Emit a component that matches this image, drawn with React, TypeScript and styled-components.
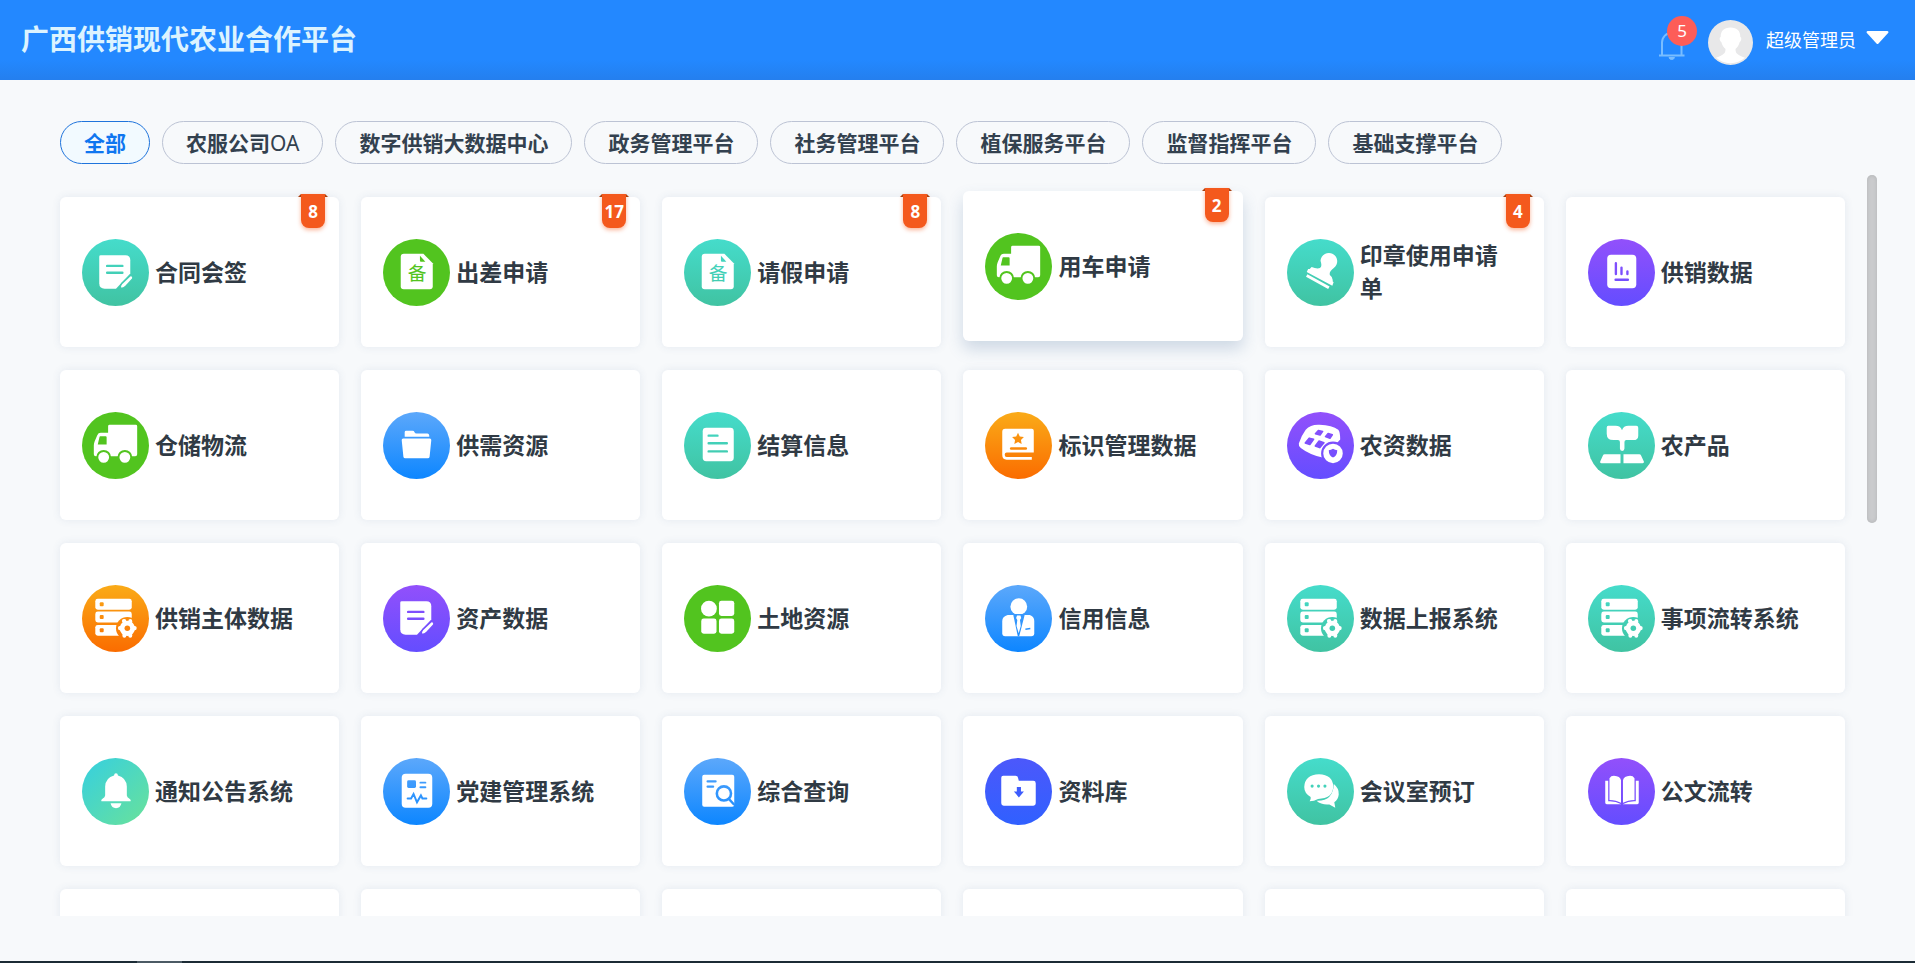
import React from "react";
import styled, { createGlobalStyle } from "styled-components";

const GlobalStyle = createGlobalStyle`
  *, *::before, *::after { box-sizing: border-box; }
  body {
    margin: 0;
    background: #f7f9fb;
    font-family: "Noto Sans", "Noto Sans CJK SC", sans-serif;
    color: #303a46;
  }
  button { font: inherit; color: inherit; cursor: pointer; }
`;

const Page = styled.div`
  display: flex;
  flex-direction: column;
  height: 100vh;
`;

const Header = styled.header`
  flex: none;
  display: flex;
  align-items: center;
  justify-content: space-between;
  height: 80px;
  padding: 0 26px 4px 21px;
  background: linear-gradient(#2388ff 75%, #247fee);
`;

const Title = styled.h1`
  margin: 0;
  font-size: 28px;
  line-height: 40px;
  font-weight: 700;
  font-family: "Noto Sans CJK SC", sans-serif;
  color: #dcf3ff;
`;

const UserArea = styled.div`
  display: flex;
  align-items: center;
  gap: 13px;
  padding-top: 8px;
`;

const BellButton = styled.button`
  position: relative;
  width: 36px;
  height: 46px;
  padding: 10px 0 0;
  border: 0;
  background: none;
  text-align: left;
`;

const BellCount = styled.span`
  position: absolute;
  top: -3px;
  right: -2px;
  width: 30px;
  height: 30px;
  border-radius: 50%;
  background: #fd5d58;
  color: #fff;
  font-size: 17px;
  line-height: 30px;
  text-align: center;
`;

const UserButton = styled.button`
  display: flex;
  align-items: center;
  gap: 13px;
  padding: 0;
  border: 0;
  background: none;
`;

const UserName = styled.span`
  font-size: 18px;
  line-height: 28px;
  color: #fff;
  padding-bottom: 4px;
`;

const Caret = styled.svg`
  margin: 0 0 8px -3px;
`;

const Main = styled.main`
  flex: 1;
  min-height: 0;
  display: flex;
  flex-direction: column;
  gap: 11px;
  padding: 41px 38px 45px 50px;
`;

const Tabs = styled.nav`
  display: flex;
  gap: 12px;
  padding-left: 10px;
`;

const Tab = styled.button<{ $active?: boolean }>`
  height: 43px;
  padding: 0 23px;
  border: 1px solid ${(p) => (p.$active ? "#1f74dc" : "#bcc3d4")};
  border-radius: 22px;
  background: ${(p) => (p.$active ? "#f2faff" : "#f7f9fb")};
  color: ${(p) => (p.$active ? "#0f76f0" : "#33414f")};
  font-size: 21px;
  line-height: 40px;
  font-weight: 700;
  white-space: nowrap;
`;

const Latin = styled.span`
  font-weight: 400;
`;

const Panel = styled.div`
  flex: 1;
  min-height: 0;
  display: flex;
  gap: 10px;
`;

const Scroller = styled.div`
  flex: 1;
  min-width: 0;
  overflow-y: auto;
  scrollbar-width: none;
  padding: 22px 12px 22px 10px;
`;

const Rail = styled.div`
  width: 10px;
`;

const Thumb = styled.div`
  height: 47%;
  border-radius: 5px;
  background: #cbccce;
  box-shadow: inset 0 0 4px #b2b4b6;
`;

const Grid = styled.div`
  display: grid;
  grid-template-columns: repeat(6, minmax(0, 1fr));
  gap: 23px 22px;
`;

const Card = styled.a<{ $raised?: boolean }>`
  position: relative;
  display: flex;
  align-items: center;
  gap: 6px;
  height: 150px;
  padding: 0 28px 0 22px;
  border-radius: 6px;
  background: #fff;
  color: #303a44;
  text-decoration: none;
  box-shadow: ${(p) =>
    p.$raised ? "0 8px 16px rgba(60, 100, 150, 0.22)" : "0 0 8px rgba(60, 90, 140, 0.1)"};
  transform: ${(p) => (p.$raised ? "translateY(-6px)" : "none")};
`;

const CardName = styled.span`
  font-size: 23px;
  line-height: 33px;
  font-weight: 700;
`;

const Ribbon = styled.span`
  position: absolute;
  top: -3px;
  right: 14px;
  width: 24px;
  height: 34px;
  border-radius: 0 0 8px 8px;
  background: #f4591d;
  color: #fff;
  font-size: 17px;
  line-height: 36px;
  font-weight: 700;
  text-align: center;
  box-shadow: 0 2px 4px rgba(244, 89, 29, 0.45);

  &::before,
  &::after {
    content: "";
    position: absolute;
    top: 0;
    border-bottom: 3px solid #a8410f;
  }
  &::before {
    left: -3px;
    border-left: 3px solid transparent;
  }
  &::after {
    right: -3px;
    border-right: 3px solid transparent;
  }
`;

const IconSvg = styled.svg`
  flex: none;
  display: block;
`;

const Taskbar = styled.footer`
  flex: none;
  height: 2px;
  background: linear-gradient(90deg, #1b2b35 137px, #4b5a64 137px, #4b5a64 182px, #1b2b35 182px);
`;

type Tone = "teal" | "green" | "violet" | "blue" | "orange" | "mint" | "indigo";

const tones: Record<Tone, [string, string]> = {
  teal: ["#45dccb", "#40c3a2"],
  green: ["#52c41f", "#52c41f"],
  violet: ["#9250fb", "#644dff"],
  blue: ["#5ca8fb", "#0d86ff"],
  orange: ["#faab18", "#fa6c00"],
  mint: ["#3dd2d6", "#62dfa4"],
  indigo: ["#4c58fb", "#3060ff"],
};

type Glyph =
  | "sign" | "form" | "truck" | "stamp" | "chart" | "folder" | "list" | "book"
  | "solar" | "sprout" | "server" | "blocks" | "person" | "bell" | "party"
  | "search" | "library" | "chat" | "reader";

function drawGlyph(kind: Glyph, c: string): React.ReactNode {
  const line = { fill: "none", stroke: c, strokeWidth: 2.4, strokeLinecap: "round" as const };
  switch (kind) {
    case "sign":
      return (
        <>
          <path d="M19 16.500H44q5 0 5 5V35L34.500 50.500H23q-5.500 0-5.500-5.500V18q0-1.500 1.500-1.500z" />
          <path d="M25.500 27.300H41M25.500 34.300H41" {...line} />
          <path
            d="M48.500 37.500q1-1 2.300 0t.7 2.800L44.500 48q-1.800 2-5.500 2.300-.5-3.300 1.500-5.300z"
            stroke={c}
            strokeWidth="1.500"
          />
        </>
      );
    case "form":
      return (
        <>
          <path d="M21 15h20l9.500 9.500V48q0 3-3 3H21q-3 0-3-3V18q0-3 3-3z" />
          <path d="M37.500 17l5.500 6h-4.500q-1 0-1-1z" fill={c} />
          <text x="34.500" y="42" fontSize="19" textAnchor="middle" fill={c}>备</text>
        </>
      );
    case "truck":
      return (
        <>
          <path d="M28 13h26.500q1.500 0 1.500 1.500V43q0 2-2 2H14q-2 0-2-2V34q0-2 .8-4l2.700-6.500q1-2.500 3.500-2.500H26.500V14.500q0-1.500 1.500-1.500z" />
          <path d="M18.500 24.500H24q1 0 1 1V33h-9l1.700-7.500q.2-1 .8-1z" fill={c} />
          <circle cx="22" cy="46" r="6.500" stroke={c} strokeWidth="2" />
          <circle cx="43.500" cy="46" r="6.500" stroke={c} strokeWidth="2" />
        </>
      );
    case "stamp":
      return (
        <>
          <path d="M34 22a8.500 8.500 0 1 1 13.500 7.500Q42.500 33 43.500 36.500q3.500 2.500 2.800 6.500l1 1-1.300 3.500L20 33.500l1.500-3h1.500l2-2q5 2 8.500 1Q36 28 34 22z" />
          <path d="M20 37l22.500 12.500" stroke="#fff" strokeWidth="3" />
        </>
      );
    case "chart":
      return (
        <>
          <rect x="19.500" y="16" width="29.500" height="34" rx="4" />
          <path d="M28.300 24.500V35.500M34 29v6.500M40 33v2.500M28 41.300H40.500" {...line} />
        </>
      );
    case "folder":
      return (
        <>
          <path d="M23.500 19h6.500q1.500 0 2 1.500.5 1.300 2 1.300h11q2 0 2 3.200H22V20.500q0-1.500 1.500-1.500z" />
          <path d="M20.500 27h27q1.700 0 1.500 1.700l-1.700 16.600q-.2 1.700-1.900 1.700H22.600q-1.700 0-1.900-1.700L19 28.700Q18.800 27 20.500 27z" />
        </>
      );
    case "list":
      return (
        <>
          <rect x="19" y="16" width="31.500" height="34" rx="3.500" />
          <path d="M25 24H34M25 31.700H43.500M25 40H43.500" {...line} />
        </>
      );
    case "book":
      return (
        <>
          <path d="M20.500 17H47.500q2 0 2 2V41H22q-2 0-2 2.300t2 2.300H47.500V48.500H22q-4.500 0-4.500-5V20q0-3 3-3z" />
          <path d="M33.500 21l1.800 3.800 4.200.5-3 3 .7 4.200-3.700-2-3.700 2 .7-4.200-3-3 4.200-.5z" fill={c} />
          <path d="M26.500 37H41.500" {...line} />
        </>
      );
    case "solar":
      return (
        <>
          <path d="M12 32Q14.500 24 19 18q5-5.500 14-5 13 .5 19 5 2 2 2 10L37 46.500q-14-3-23-10-2.500-2-2-4.500z" />
          <g fill={c} strokeLinejoin="round" stroke={c} strokeWidth="1.500">
            <path d="M28.800 22l3-3.300 4.400 1-2.600 3.700z" />
            <path d="M39 25l2.700-3.300 4.300 1.400-2.400 3.600z" />
            <path d="M18.500 31.500l4-5 4.500 1.200-3.800 5.300z" />
            <path d="M28.700 34.500l3.800-5 5 1.700-4.300 5z" />
          </g>
          <circle cx="46.700" cy="42" r="11" stroke={c} strokeWidth="2.200" />
          <path d="M46.700 37.300q2 1.400 4.300 1.500 0 5.500-4.300 7.500-4.300-2-4.300-7.500 2.300-.1 4.300-1.500z" fill={c} />
        </>
      );
    case "sprout":
      return (
        <>
          <path d="M20.500 14H28q5 0 6.500 4.500Q36 14 41 14h8q2 0 2 2v8q0 4.500-5 4.500h-7q-2 0-2 2V37q0 2.500-2.300 2.500T32.400 37V30.500q0-2-2-2H26q-7 0-7-6.500V16q0-2 1.500-2z" />
          <path d="M17 43H33v9H13.500q-1.500 0-1.200-1.500L15 44.500q.6-1.500 2-1.500zM36 43H52q1.400 0 2 1.500l2.800 6Q57 52 55.500 52H36z" />
        </>
      );
    case "server":
      return (
        <>
          <rect x="13.500" y="14" width="37" height="11" rx="2.500" />
          <rect x="13.500" y="27" width="37" height="11" rx="2.500" />
          <rect x="13.500" y="40.500" width="26" height="11" rx="2.500" />
          <rect x="18" y="17.500" width="4" height="4" rx="1" fill={c} />
          <rect x="18" y="30.500" width="4" height="4" rx="1" fill={c} />
          <rect x="18" y="44" width="4" height="4" rx="1" fill={c} />
          <circle cx="46" cy="44" r="11.500" fill={c} />
          <circle cx="46" cy="44" r="7.800" />
          <path
            d="M43 37.500v-1M49 37.500v-1M43 50.500v1M49 50.500v1M39 43.500h-.5M53 43.500h.5M40 40.500M43 36.500h-.5M49.500 36.500M38.500 44h1M52.500 44h1"
            stroke="#fff"
            strokeWidth="4"
            strokeLinecap="round"
          />
          <circle cx="46" cy="44" r="2.800" fill={c} />
        </>
      );
    case "blocks":
      return (
        <>
          <circle cx="25.300" cy="24" r="8" />
          <rect x="35.500" y="16" width="15.500" height="15.500" rx="2.500" />
          <rect x="17.500" y="34" width="15.500" height="15.500" rx="2.500" />
          <rect x="35.500" y="34" width="15.500" height="15.500" rx="2.500" />
        </>
      );
    case "person":
      return (
        <>
          <circle cx="34.300" cy="22" r="8.500" />
          <path d="M23 30.500h22.500q4.500 1.500 4.500 6V49q0 3-3 3H20.500q-3 0-3-3V36.500q0-4.500 5.500-6z" />
          <path d="M28.500 29.500l4.800 22.500h1.400L40.500 29.500z" fill={c} />
          <path d="M32.500 31h3.500l.8 2.500-1.300 2 .8 6L34.200 49l-2.200-7.500.8-6-1.200-2z" />
          <path d="M41 45l5-.8" stroke={c} strokeWidth="1.600" />
        </>
      );
    case "bell":
      return (
        <>
          <path d="M34.500 15.500q1.800 0 2 2.300Q45 20 45.500 29V38q0 2 3 3.500 1.500 1 .8 2.500H19.700q-.7-1.500.8-2.500 3-1.500 3-3.500V29Q24 20 32.500 17.800q.2-2.300 2-2.300z" />
          <path d="M29 46H40q-1 5-5.500 5T29 46z" />
        </>
      );
    case "party":
      return (
        <>
          <rect x="19" y="16" width="31" height="34.500" rx="4" />
          <rect x="24.500" y="22.500" width="9" height="8" rx="1.500" fill={c} />
          <path d="M38 25h5M38 29.700h5M25 41h3.500l2.500-4.500 3.500 8.500 4-7 1.500 3H44" {...line} strokeWidth="2" />
        </>
      );
    case "search":
      return (
        <>
          <rect x="18.500" y="17" width="32.500" height="32.500" rx="2" />
          <path d="M24 23.700H32M24 29H29.500" {...line} />
          <circle cx="40.500" cy="36" r="7.200" fill="none" stroke={c} strokeWidth="2.600" />
          <path d="M45.500 41.500L50.500 47" {...line} />
        </>
      );
    case "library":
      return (
        <>
          <path d="M18.500 18H31q2 0 2.500 2l.8 3.200H49q2.500 0 2.500 2.500V46q0 2.500-2.500 2.500H19q-2.500 0-2.500-2.500V20q0-2 2-2z" />
          <path d="M32.300 29.500h4.200V34H39.500L34.400 40 29.300 34h3z" fill={c} />
        </>
      );
    case "chat":
      return (
        <>
          <path d="M47.500 26.500Q53 31 52.500 37q-.5 5-4.500 8l1 5.500-6-3.300Q35 48 30 43.500 47 44 47.500 26.500z" />
          <path d="M32.500 16.500q14 .5 14.500 12.500-.5 12.500-15.500 12.500-4 2.500-8.500 2.500 1.500-2 1-4.500Q17.500 36 17.500 29.500q.5-12.500 15-13z" />
          <g fill={c}>
            <circle cx="25.500" cy="28.500" r="1.600" />
            <circle cx="32" cy="28.500" r="1.600" />
            <circle cx="38.500" cy="28.500" r="1.600" />
          </g>
        </>
      );
    case "reader":
      return (
        <>
          <path d="M17.500 23h3V44q7-.5 13.300 3H19q-1.500 0-1.500-1.500zM51.500 23h-3V44q-7-.5-13.300 3H50q1.500 0 1.500-1.500z" />
          <path d="M21.800 20.500q1.500-2.500 4.500-2.500 6.500.5 7.200 4.500V45.500q-5-3-11.700-3zM47.200 20.500q-1.500-2.500-4.500-2.500-6.500.5-7.200 4.500V45.500q5-3 11.700-3z" />
        </>
      );
  }
}

function AppIcon({ glyph, tone, id }: { glyph: Glyph; tone: Tone; id: string }) {
  const [from, to] = tones[tone];
  const paint = `url(#${id})`;
  const diagonal = tone === "mint";
  return (
    <IconSvg width="67" height="67" viewBox="0 0 68 68" aria-hidden="true">
      <defs>
        <linearGradient
          id={id}
          gradientUnits="userSpaceOnUse"
          x1={diagonal ? 10 : 34}
          y1={diagonal ? 10 : 0}
          x2={diagonal ? 58 : 34}
          y2={diagonal ? 58 : 68}
        >
          <stop stopColor={from} />
          <stop offset="1" stopColor={to} />
        </linearGradient>
      </defs>
      <circle cx="34" cy="34" r="34" fill={paint} />
      <g fill="#fff">{drawGlyph(glyph, paint)}</g>
    </IconSvg>
  );
}

interface Entry {
  name: string;
  glyph: Glyph;
  tone: Tone;
  count?: number;
  raised?: boolean;
}

const entries: Entry[] = [
  { name: "合同会签", glyph: "sign", tone: "teal", count: 8 },
  { name: "出差申请", glyph: "form", tone: "green", count: 17 },
  { name: "请假申请", glyph: "form", tone: "teal", count: 8 },
  { name: "用车申请", glyph: "truck", tone: "green", count: 2, raised: true },
  { name: "印章使用申请单", glyph: "stamp", tone: "teal", count: 4 },
  { name: "供销数据", glyph: "chart", tone: "violet" },
  { name: "仓储物流", glyph: "truck", tone: "green" },
  { name: "供需资源", glyph: "folder", tone: "blue" },
  { name: "结算信息", glyph: "list", tone: "teal" },
  { name: "标识管理数据", glyph: "book", tone: "orange" },
  { name: "农资数据", glyph: "solar", tone: "violet" },
  { name: "农产品", glyph: "sprout", tone: "teal" },
  { name: "供销主体数据", glyph: "server", tone: "orange" },
  { name: "资产数据", glyph: "sign", tone: "violet" },
  { name: "土地资源", glyph: "blocks", tone: "green" },
  { name: "信用信息", glyph: "person", tone: "blue" },
  { name: "数据上报系统", glyph: "server", tone: "teal" },
  { name: "事项流转系统", glyph: "server", tone: "teal" },
  { name: "通知公告系统", glyph: "bell", tone: "mint" },
  { name: "党建管理系统", glyph: "party", tone: "blue" },
  { name: "综合查询", glyph: "search", tone: "blue" },
  { name: "资料库", glyph: "library", tone: "indigo" },
  { name: "会议室预订", glyph: "chat", tone: "teal" },
  { name: "公文流转", glyph: "reader", tone: "violet" },
];

const spareCards = [1, 2, 3, 4, 5, 6];

const tabs = [
  "数字供销大数据中心",
  "政务管理平台",
  "社务管理平台",
  "植保服务平台",
  "监督指挥平台",
  "基础支撑平台",
];

export default function App() {
  return (
    <Page>
      <GlobalStyle />
      <Header>
        <Title>广西供销现代农业合作平台</Title>
        <UserArea>
          <BellButton type="button" aria-label="消息">
            <svg width="26" height="30" viewBox="0 0 26 30" fill="none" stroke="#79bdff" strokeWidth="2">
              <path d="M3 25V12.500a9.500 9.500 0 0 1 19.500 0V25M0 25.500H25.500" />
              <path d="M10 27.500h5.500q-.5 2-2.750 2T10 27.500z" fill="#79bdff" strokeWidth="1" />
            </svg>
            <BellCount>5</BellCount>
          </BellButton>
          <UserButton type="button">
            <svg width="45" height="45" viewBox="0 0 45 45" aria-hidden="true">
              <circle cx="22.500" cy="22.500" r="22.500" fill="#e8e8e9" />
              <path
                d="M22.500 7.500c7 0 10 4 9.800 9.500 1.600.3 1.200 4-.6 5-.8 3.500-2.500 5.500-4.200 7 0 4.500 1.500 5.500 9.500 8.800A22.400 22.400 0 0 1 8 37.800c8-3.300 9.500-4.300 9.500-8.800-1.700-1.500-3.400-3.500-4.200-7-1.800-1-2.200-4.700-.6-5-.2-5.500 2.800-9.500 9.800-9.500z"
                fill="#fff"
              />
            </svg>
            <UserName>超级管理员</UserName>
            <Caret width="23" height="14" viewBox="0 0 23 14" aria-hidden="true">
              <path d="M1.500 0h20q1.500.5.800 1.800L12.500 12.500q-1 1-2 0L.7 1.800Q0 .5 1.500 0z" fill="#fff" />
            </Caret>
          </UserButton>
        </UserArea>
      </Header>
      <Main>
        <Tabs>
          <Tab type="button" $active>全部</Tab>
          <Tab type="button">农服公司<Latin>OA</Latin></Tab>
          {tabs.map((name) => (
            <Tab type="button" key={name}>{name}</Tab>
          ))}
        </Tabs>
        <Panel>
          <Scroller>
            <Grid>
              {entries.map((entry, i) => (
                <Card href="#" key={entry.name} $raised={entry.raised}>
                  <AppIcon glyph={entry.glyph} tone={entry.tone} id={`tone-${i}`} />
                  <CardName>{entry.name}</CardName>
                  {entry.count !== undefined && <Ribbon>{entry.count}</Ribbon>}
                </Card>
              ))}
              {spareCards.map((n) => (
                <Card href="#" key={n} />
              ))}
            </Grid>
          </Scroller>
          <Rail>
            <Thumb />
          </Rail>
        </Panel>
      </Main>
      <Taskbar />
    </Page>
  );
}
